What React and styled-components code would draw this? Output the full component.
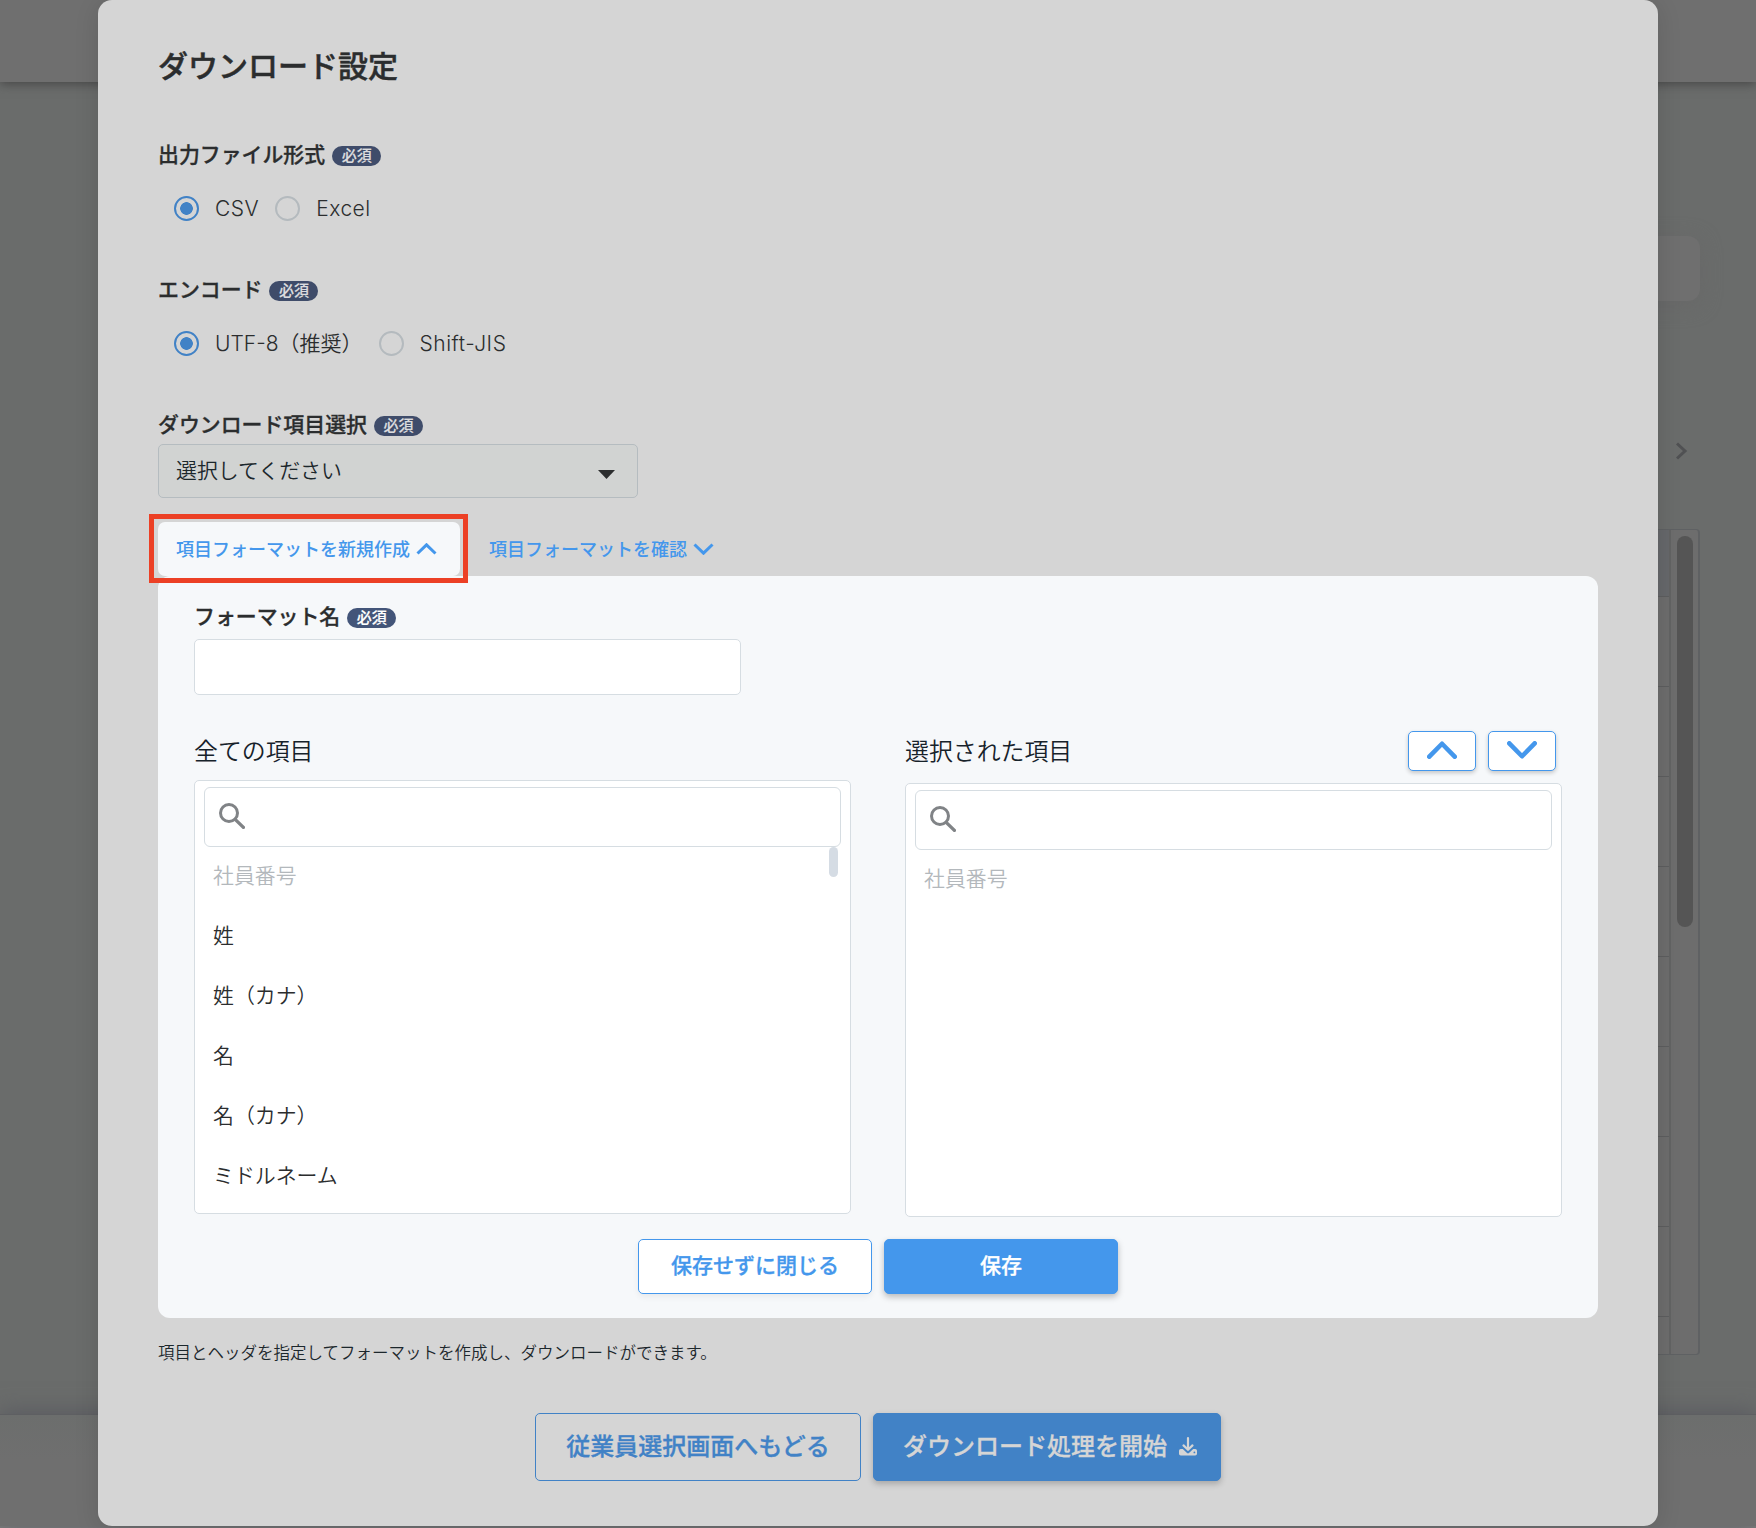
import React, { useState } from 'react'
import styled, { createGlobalStyle, css } from 'styled-components'

// employee download settings modal

const blue = '#4497ec'
const dimBlue = '#4182c6'

const fileTypes = ['CSV', 'Excel']
const encodings = ['UTF-8（推奨）', 'Shift-JIS']
const allItems = ['社員番号', '姓', '姓（カナ）', '名', '名（カナ）', 'ミドルネーム']
const lockedItems = ['社員番号']
const tableRows = [1, 2, 3, 4, 5, 6, 7, 8]

const Chevron = ({ up, width, height, stroke, round }) => (
  <svg width={width} height={height} viewBox={`0 0 ${width} ${height}`} fill="none">
    <path
      d={up
        ? `M${stroke / 2} ${height - stroke / 2}L${width / 2} ${stroke * 0.6}L${width - stroke / 2} ${height - stroke / 2}`
        : `M${stroke / 2} ${stroke / 2}L${width / 2} ${height - stroke * 0.6}L${width - stroke / 2} ${stroke / 2}`}
      stroke={blue}
      strokeWidth={stroke}
      strokeLinecap={round ? 'round' : 'butt'}
      strokeLinejoin={round ? 'round' : 'miter'}
    />
  </svg>
)

const SearchIcon = () => (
  <svg width="26" height="26" viewBox="0 0 26 26" fill="none" stroke="#808386" strokeWidth="3">
    <circle cx="10" cy="10" r="8.5" />
    <path d="M16.4 16.6L24.4 24.4" strokeWidth="3.4" strokeLinecap="round" />
  </svg>
)

const DownloadIcon = () => (
  <svg width="18" height="19" viewBox="0 0 18 19">
    <path d="M1.8 12H3.8L8 16.1Q9 16.9 10 16.1L14.2 12H16.2Q18 12 18 13.8V16.8Q18 18.6 16.2 18.6H1.8Q0 18.6 0 16.8V13.8Q0 12 1.8 12Z" fill="#d5d5d5" />
    <path d="M9 1.1V12.5M4.5 8.4L9 12.8L13.5 8.4" fill="none" stroke="#d5d5d5" strokeWidth="2.2" strokeLinecap="round" strokeLinejoin="round" />
    <circle cx="15.4" cy="15.4" r="0.9" fill={dimBlue} />
  </svg>
)

const RadioField = ({ label, options, value, onChange }) => (
  <Field>
    <Label>{label}<Required>必須</Required></Label>
    <RadioRow>
      {options.map(option => (
        <RadioLabel key={option} onClick={() => onChange(option)}>
          <Radio $checked={value == option} />
          <RadioText $latin={/^[\w-]+$/.test(option)}>{option}</RadioText>
        </RadioLabel>
      ))}
    </RadioRow>
  </Field>
)

const ItemList = ({ items }) => (
  <ListBox>
    <SearchBox><SearchIcon /></SearchBox>
    {items.map(item => (
      <Item key={item} $locked={lockedItems.includes(item)}>{item}</Item>
    ))}
    {items.length > 1 && <ListThumb />}
  </ListBox>
)

const App = () => {

  const [ fileType, setFileType ] = useState('CSV')
  const [ encoding, setEncoding ] = useState('UTF-8（推奨）')
  const [ formatName, setFormatName ] = useState('')

  return (
    <>
    <GlobalStyle />
    <Page>
      <Header />
      <Backdrop>
        <PageSearch />
        <Next>
          <svg width="12" height="18" viewBox="0 0 12 18" fill="none">
            <path d="M1 1.5L9 9L1 16.5" stroke="#505153" strokeWidth="3" />
          </svg>
        </Next>
        <Table>
          <Rows>
            <HeadCell />
            {tableRows.map(row => <Cell key={row} />)}
          </Rows>
          <Track><Thumb /></Track>
        </Table>
      </Backdrop>
      <Footer />
    </Page>

    <Modal>
      <Title>ダウンロード設定</Title>
      <RadioField label="出力ファイル形式" options={fileTypes} value={fileType} onChange={setFileType} />
      <RadioField label="エンコード" options={encodings} value={encoding} onChange={setEncoding} />
      <Label>ダウンロード項目選択<Required>必須</Required></Label>
      <Select>
        選択してください
        <Caret width="17" height="9" viewBox="0 0 17 9"><path d="M0 0H17L8.5 9Z" fill="#2b2d2e" /></Caret>
      </Select>

      <Tabs>
        <Tab $active>
          <TabText>項目フォーマットを新規作成</TabText>
          <Chevron up width={21} height={12} stroke={3} />
          <Highlight />
        </Tab>
        <Tab>
          <TabText>項目フォーマットを確認</TabText>
          <Chevron width={21} height={12} stroke={3} />
        </Tab>
      </Tabs>

      <Panel>
        <Label>フォーマット名<Required $bright>必須</Required></Label>
        <Input value={formatName} onChange={(e) => setFormatName(e.target.value)} />
        <Columns>
          <Column>
            <ColumnHead><Heading>全ての項目</Heading></ColumnHead>
            <ItemList items={allItems} />
          </Column>
          <Column>
            <ColumnHead $tall>
              <Heading>選択された項目</Heading>
              <MoveButtons>
                <MoveButton><Chevron up round width={30} height={18} stroke={4.6} /></MoveButton>
                <MoveButton><Chevron round width={30} height={18} stroke={4.6} /></MoveButton>
              </MoveButtons>
            </ColumnHead>
            <ItemList items={lockedItems} />
          </Column>
        </Columns>
        <PanelActions>
          <PanelButton>保存せずに閉じる</PanelButton>
          <PanelButton $primary>保存</PanelButton>
        </PanelActions>
      </Panel>

      <Note>項目とヘッダを指定してフォーマットを作成し、ダウンロードができます。</Note>

      <Actions>
        <ActionButton>従業員選択画面へもどる</ActionButton>
        <ActionButton $primary>ダウンロード処理を開始<IconSlot><DownloadIcon /></IconSlot></ActionButton>
      </Actions>
    </Modal>
    </>
  )
}

const GlobalStyle = createGlobalStyle`
  * {
    box-sizing: border-box;
  }

  body {
    margin: 0;
    height: 1528px;
    overflow: hidden;
    background: #7c7c7c;
    color: #2b2d2e;
    font-family: Inter, "Noto Sans CJK JP", sans-serif;
    font-weight: 350;
    font-size: 21px;
  }

  svg {
    display: block;
    flex-shrink: 0;
  }

  button, input {
    font-family: inherit;
  }
`;

// sits between the medium and bold cuts
const semiBold = css`
  font-weight: 500;
  -webkit-text-stroke: 0.3px currentColor;
`;

const Page = styled.div`
  display: flex;
  flex-direction: column;
  height: 1526px;
  background: #6a6c6b;
`;

const Header = styled.header`
  height: 82px;
  background: #6f6f6f;
  box-shadow: 0 2px 10px #464646;
  z-index: 1;
`;

const Backdrop = styled.div`
  flex: 1;
  display: flex;
  flex-direction: column;
  align-items: flex-end;
  padding-right: 56px;
`;

const PageSearch = styled.div`
  width: 400px;
  height: 65px;
  margin-top: 154px;
  border-radius: 12px;
  background: #6f6f6f;
  box-shadow: 0 4px 20px #686868;
`;

const Next = styled.div`
  margin: 141px 12px 69px 0;
`;

const Table = styled.div`
  display: flex;
  width: 800px;
  height: 826px;
  border: 1px solid #5f6163;
  border-right-width: 2px;
  border-radius: 4px;
  background: #6d6d6d;
  overflow: hidden;
`;

const Rows = styled.div`
  flex: 1;
  border-right: 2px solid #626363;
`;

const Cell = styled.div`
  height: 90px;
  border-bottom: 1px solid #5d5e5f;
`;

const HeadCell = styled(Cell)`
  height: 67px;
  background: #66686b;
`;

const Track = styled.div`
  width: 27px;
  padding: 6px;
`;

const Thumb = styled.div`
  width: 16px;
  height: 391px;
  border-radius: 8px;
  background: #555;
`;

const Footer = styled.footer`
  height: 112px;
  border-top: 1px solid #5e5f62;
  background: linear-gradient(#6c6e6d, #6f6f6f 40%);
  box-shadow: 0 -3px 20px #5a5b61;
`;

const Modal = styled.main`
  position: absolute;
  top: 0;
  left: 98px;
  z-index: 2;
  width: 1560px;
  height: 1526px;
  padding: 44px 60px 0;
  border-radius: 14px;
  background: #d5d5d5;
  box-shadow: 0 4px 24px rgba(0, 0, 0, 0.12);
`;

const Title = styled.h1`
  margin: 0;
  height: 96px;
  line-height: 44px;
  font-size: 30px;
  ${semiBold}
  -webkit-text-stroke-width: 0.5px;
`;

const Field = styled.div`
  height: 135px;
`;

const Label = styled.div`
  display: flex;
  align-items: center;
  gap: 7px;
  height: 31px;
  font-size: 20.9px;
  line-height: 31px;
  padding-bottom: 3px;
  white-space: nowrap;
  ${semiBold}
`;

const Required = styled.span`
  width: 49px;
  height: 20px;
  margin-top: 3px;
  border-radius: 10px;
  background: ${({ $bright }) => $bright ? '#435579' : '#3f4c6a'};
  color: ${({ $bright }) => $bright ? '#fff' : '#dcdcde'};
  font-size: 15px;
  line-height: 19px;
  text-align: center;
  -webkit-text-stroke: 0.2px currentColor;
`;

const RadioRow = styled.div`
  display: flex;
  gap: 16px;
  margin: 24px 0 0 16px;
`;

const RadioLabel = styled.label`
  display: flex;
  align-items: center;
  gap: 16px;
  height: 27px;
  white-space: nowrap;
`;

const RadioText = styled.span`
  padding-bottom: ${({ $latin }) => $latin ? '1px' : '3px'};
  letter-spacing: ${({ $latin }) => $latin ? '0.5px' : '0'};
`;

const Radio = styled.span`
  width: 25px;
  height: 25px;
  border-radius: 50%;
  border: 2.5px solid ${({ $checked }) => $checked ? dimBlue : '#b4babe'};
  ${({ $checked }) => $checked && css`
    background: radial-gradient(circle, ${dimBlue} 6px, transparent 6.6px);
  `}
`;

const Select = styled.div`
  display: flex;
  align-items: center;
  justify-content: space-between;
  width: 480px;
  height: 54px;
  margin-top: 3px;
  padding: 0 22px 5px 17px;
  border: 1px solid #b5bcc0;
  border-radius: 5px;
  background: #d1d3d2;
  color: #1c272c;
  font-size: 20.9px;
`;

const Caret = styled.svg`
  margin-top: 11px;
`;

const Tabs = styled.div`
  display: flex;
  gap: 11px;
  margin-top: 24px;
`;

const Tab = styled.div`
  position: relative;
  display: flex;
  align-items: center;
  gap: 6px;
  height: 54px;
  padding: 0 23px 0 18px;
  border-radius: 7px;
  background: ${({ $active }) => $active ? '#f6f8fa' : 'transparent'};
  color: ${blue};
  font-size: 18px;
  white-space: nowrap;
  font-weight: 500;
`;

const TabText = styled.span`
  padding-bottom: 2px;
`;

const Highlight = styled.span`
  position: absolute;
  top: -8px;
  left: -9px;
  width: 319px;
  height: 69px;
  border: 5px solid #ec4025;
`;

const Panel = styled.section`
  height: 742px;
  padding: 26px 36px 0;
  border-radius: 12px;
  background: #f6f8fa;
`;

const Input = styled.input`
  display: block;
  width: 547px;
  height: 56px;
  margin-top: 6px;
  padding: 0 16px;
  border: 1px solid #d6dde2;
  border-radius: 5px;
  background: #fff;
  font-size: 21px;
`;

const Columns = styled.div`
  display: flex;
  gap: 54px;
  margin-top: 36px;
`;

const Column = styled.div`
  width: 657px;
`;

const ColumnHead = styled.div`
  display: flex;
  justify-content: space-between;
  height: ${({ $tall }) => $tall ? '52px' : '49px'};
  padding-right: 6px;
`;

const Heading = styled.h2`
  margin: 0;
  color: #17222a;
  font-size: 23.9px;
  font-weight: 350;
  line-height: 42px;
`;

const MoveButtons = styled.div`
  display: flex;
  gap: 12px;
`;

const MoveButton = styled.button`
  display: flex;
  justify-content: center;
  width: 68px;
  height: 40px;
  padding: 9px 0 0;
  border: 1px solid ${blue};
  border-radius: 5px;
  background: #fff;
  box-shadow: 0 2px 4px rgba(0, 0, 0, 0.2);
`;

const ListBox = styled.div`
  position: relative;
  height: 434px;
  padding: 6px 9px;
  border: 1px solid #d6dde2;
  border-radius: 5px;
  background: #fff;
`;

const SearchBox = styled.div`
  display: flex;
  align-items: center;
  height: 60px;
  padding: 0 0 2px 14px;
  border: 1px solid #d6dde2;
  border-radius: 6px;
`;

const Item = styled.div`
  height: 60px;
  padding-left: 9px;
  color: ${({ $locked }) => $locked ? '#b3b8bc' : '#2b2d2e'};
  font-size: 20.9px;
  line-height: 58px;
`;

const ListThumb = styled.div`
  position: absolute;
  top: 66px;
  right: 12px;
  width: 9px;
  height: 30px;
  border-radius: 5px;
  background: #d5dce4;
`;

const Button = styled.button`
  display: flex;
  align-items: center;
  justify-content: center;
  padding: 0 0 5px;
  border-radius: 5px;
  white-space: nowrap;
  ${semiBold}
`;

const PanelActions = styled.div`
  display: flex;
  justify-content: center;
  gap: 12px;
  margin-top: 22px;
`;

const PanelButton = styled(Button)`
  width: 234px;
  height: 55px;
  border: 1px solid ${blue};
  background: ${({ $primary }) => $primary ? blue : '#fff'};
  color: ${({ $primary }) => $primary ? '#fff' : blue};
  box-shadow: 0 3px 6px rgba(0, 0, 0, ${({ $primary }) => $primary ? 0.25 : 0.06});
  font-size: 21px;
`;

const Note = styled.p`
  margin: 23px 0 0;
  color: #1c272c;
  font-size: 16.5px;
  line-height: 25px;
`;

const Actions = styled.div`
  display: flex;
  justify-content: center;
  gap: 12px;
  margin-top: 47px;
`;

const ActionButton = styled(Button)`
  gap: 12px;
  width: ${({ $primary }) => $primary ? '348px' : '326px'};
  height: 68px;
  padding-left: ${({ $primary }) => $primary ? '6px' : '0'};
  border: 1px solid ${dimBlue};
  background: ${({ $primary }) => $primary ? dimBlue : 'transparent'};
  color: ${({ $primary }) => $primary ? '#d5d5d5' : dimBlue};
  box-shadow: ${({ $primary }) => $primary ? '0 3px 6px rgba(0, 0, 0, 0.22)' : 'none'};
  font-size: 24px;
`;

const IconSlot = styled.span`
  padding-top: 4px;
`;

export default App
